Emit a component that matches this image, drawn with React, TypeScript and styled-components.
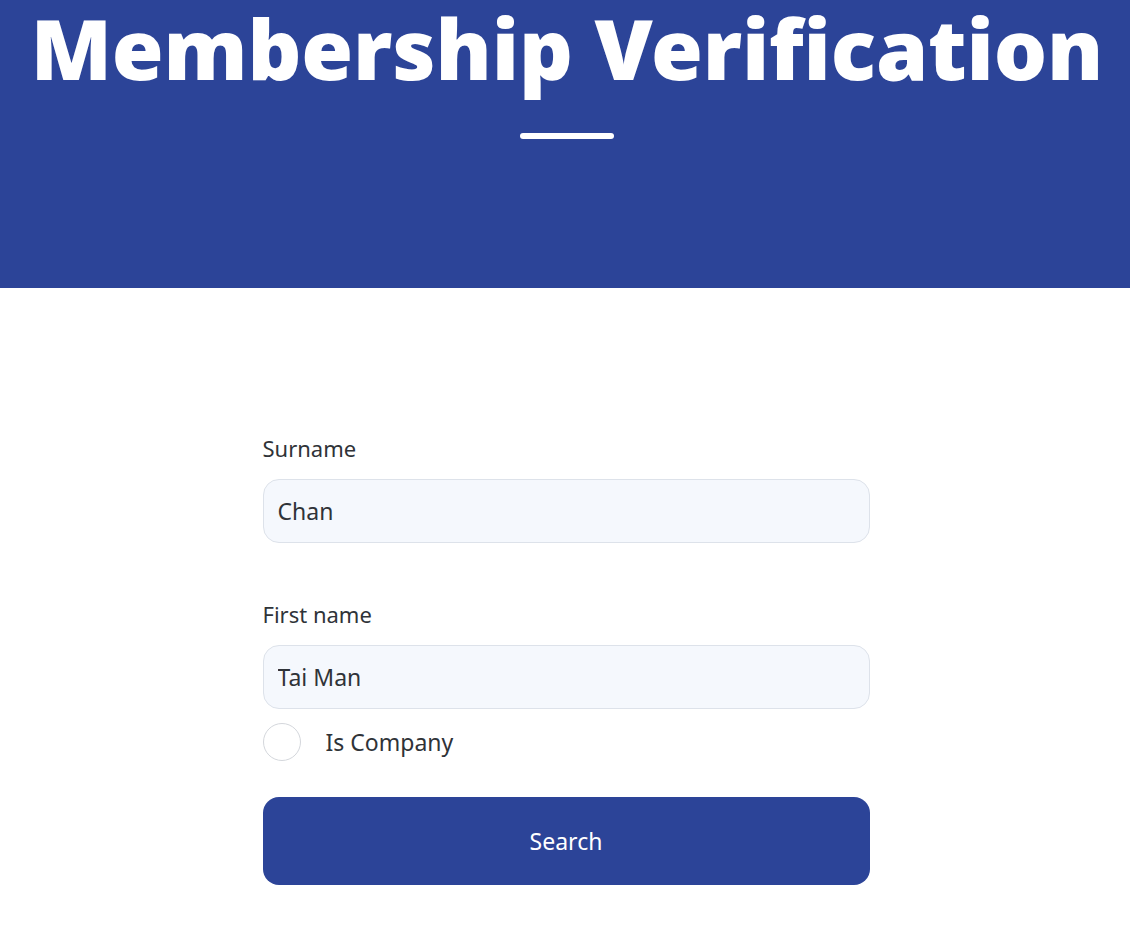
import styled, { createGlobalStyle } from "styled-components";

const GlobalStyle = createGlobalStyle`
  body {
    margin: 0;
    background: #ffffff;
    font-family: "Noto Sans", "Open Sans", sans-serif;
    color: #2f3338;
  }
`;

const Hero = styled.header`
  height: 288px;
  background: #2c4498;
  display: flex;
  flex-direction: column;
  align-items: center;
  padding-left: 4px;
  box-sizing: border-box;
`;

const Title = styled.h1`
  margin: 0;
  padding-top: 4px;
  font-family: "Noto Sans", sans-serif;
  font-weight: 900;
  font-size: 84px;
  line-height: 88px;
  letter-spacing: -0.15px;
  color: #ffffff;
  white-space: nowrap;
`;

const TitleBar = styled.div`
  width: 94px;
  height: 6px;
  border-radius: 3px;
  background: #ffffff;
  margin-top: 41px;
`;

const Main = styled.main`
  padding-left: 2px;
`;

const Form = styled.form`
  width: 607px;
  margin: 0 auto;
  padding-top: 146px;
  display: flex;
  flex-direction: column;
`;

const Field = styled.div<{ gap?: number }>`
  display: flex;
  flex-direction: column;
  margin-bottom: ${(p) => p.gap ?? 0}px;
`;

const Label = styled.label`
  font-size: 22px;
  line-height: 28px;
  margin-bottom: 17px;
`;

const TextInput = styled.input`
  box-sizing: border-box;
  height: 64px;
  width: 100%;
  padding: 0 14px;
  border: 1px solid #dde2ea;
  border-radius: 16px;
  background: #f5f8fd;
  font-family: inherit;
  font-size: 23px;
  color: #2f3338;
  outline: none;
`;

const CheckRow = styled.label`
  display: flex;
  align-items: center;
  gap: 25px;
  margin-top: 14px;
  font-size: 23px;
`;

const Radio = styled.span`
  box-sizing: border-box;
  width: 38px;
  height: 38px;
  border-radius: 50%;
  border: 1px solid #d4d7dc;
  background: #ffffff;
`;

const SearchButton = styled.button`
  margin-top: 36px;
  height: 88px;
  border: none;
  border-radius: 16px;
  background: #2c4498;
  color: #ffffff;
  font-family: inherit;
  font-size: 23px;
  cursor: pointer;
`;

export default function App() {
  return (
    <>
      <GlobalStyle />
      <Hero>
        <Title>Membership Verification</Title>
        <TitleBar />
      </Hero>
      <Main>
        <Form onSubmit={(e) => e.preventDefault()}>
          <Field gap={57}>
            <Label>Surname</Label>
            <TextInput defaultValue="Chan" />
          </Field>
          <Field>
            <Label>First name</Label>
            <TextInput defaultValue="Tai Man" />
          </Field>
          <CheckRow>
            <Radio />
            Is Company
          </CheckRow>
          <SearchButton type="submit">Search</SearchButton>
        </Form>
      </Main>
    </>
  );
}
